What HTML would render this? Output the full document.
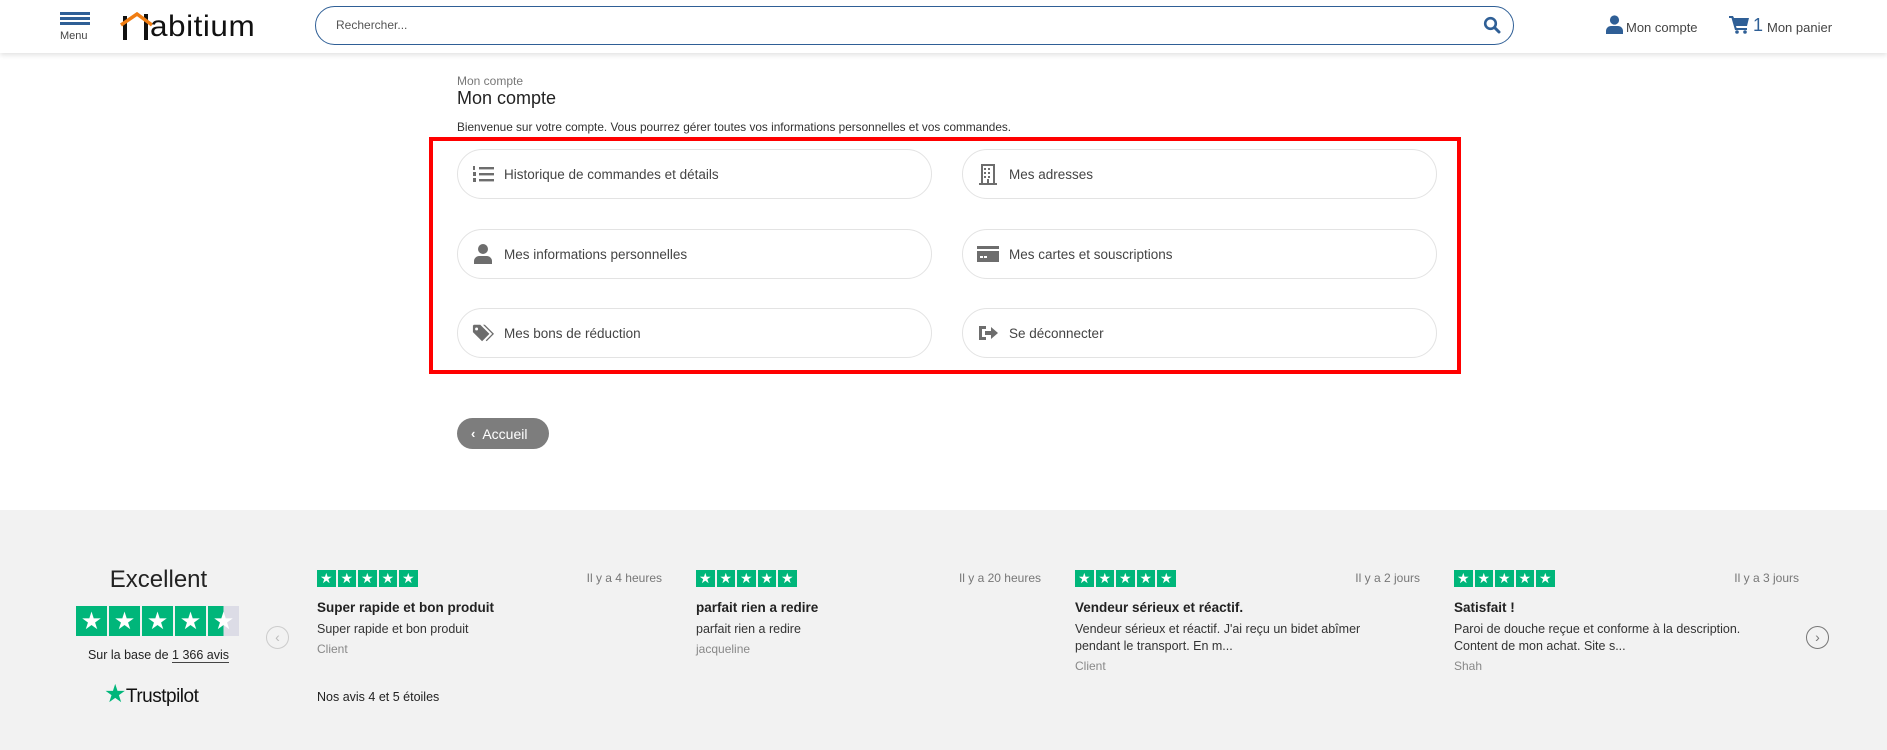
<!DOCTYPE html>
<html><head><meta charset="utf-8"><style>
*{box-sizing:border-box;margin:0;padding:0}
body{width:1887px;height:750px;position:relative;background:#fff;font-family:"Liberation Sans",sans-serif;color:#333;overflow:hidden}
.a{position:absolute}
.hdr{left:0;top:0;width:1887px;height:53px;background:#fff;box-shadow:0 2px 5px rgba(0,0,0,.12);z-index:2}
.card{position:absolute;width:475px;height:50px;border:1px solid #e3e3e3;border-radius:25px;background:#fff;font-size:13.5px;color:#444;display:flex;align-items:center;padding-left:14px}
.card svg{width:22px;height:22px;margin-right:10px;fill:#6d6d6d}
.stars{display:flex;gap:2px}
.stars span{background:#00b67a;display:flex;align-items:center;justify-content:center;color:#fff}
.rv{position:absolute;top:570px;width:345px;font-size:12.5px}
.rv .t{position:absolute;right:0;top:1px;color:#777;font-size:12px}
.rv b{display:block;margin-top:13px;font-size:13.5px;color:#222}
.rv p{margin-top:6px;line-height:17px;color:#333}
.rv i{font-style:normal;display:block;margin-top:4px;color:#888;font-size:12px}
</style></head><body>
<div class="a hdr">
  <div class="a" style="left:60px;top:12px;width:30px;height:3px;background:#2f5f96"></div>
  <div class="a" style="left:60px;top:17px;width:30px;height:3px;background:#2f5f96"></div>
  <div class="a" style="left:60px;top:22px;width:30px;height:3px;background:#2f5f96"></div>
  <div class="a" style="left:60px;top:30px;font-size:11px;color:#444">Menu</div>
  <div class="a" style="left:123px;top:16px;width:4px;height:24px;background:#111"></div>
  <div class="a" style="left:144px;top:14px;width:4px;height:26px;background:#111"></div>
  <svg class="a" style="left:118px;top:10px" width="36" height="18"><polyline points="3,15 19,4 34,15" fill="none" stroke="#f07d12" stroke-width="3.5"/></svg>
  <div class="a" style="left:150px;top:10px;font-size:30px;letter-spacing:0.5px;color:#111;transform:scaleX(1.05);transform-origin:left">abitium</div>
  <div class="a" style="left:315px;top:6px;width:1199px;height:39px;border:1px solid #2f5f96;border-radius:20px"></div>
  <div class="a" style="left:336px;top:18px;font-size:12px;color:#555">Rechercher...</div>
  <svg class="a" style="left:1483px;top:16px" width="18" height="18" viewBox="0 0 18 18"><circle cx="7.5" cy="7.5" r="5.3" fill="none" stroke="#2f5f96" stroke-width="2.6"/><line x1="11.5" y1="11.5" x2="16" y2="16" stroke="#2f5f96" stroke-width="3" stroke-linecap="round"/></svg>
  <svg class="a" style="left:1606px;top:15px" width="17" height="19" viewBox="0 0 17 19"><circle cx="8.5" cy="5" r="4.6" fill="#2f5f96"/><path d="M0 19v-3c0-3 2.5-5 5-5h7c2.5 0 5 2 5 5v3z" fill="#2f5f96"/></svg>
  <div class="a" style="left:1626px;top:20px;font-size:13px;color:#444">Mon compte</div>
  <svg class="a" style="left:1729px;top:15px" width="21" height="19" viewBox="0 0 21 19"><path d="M0 1h4l1 2h15l-2 8H7l.6 2H18v2H6L2.5 3H0z" fill="#2f5f96"/><circle cx="8" cy="17" r="1.8" fill="#2f5f96"/><circle cx="16" cy="17" r="1.8" fill="#2f5f96"/></svg>
  <div class="a" style="left:1753px;top:15px;font-size:18px;color:#2f5f96">1</div>
  <div class="a" style="left:1767px;top:20px;font-size:13px;color:#444">Mon panier</div>
</div>

<div class="a" style="left:457px;top:74px;font-size:12px;color:#777">Mon compte</div>
<div class="a" style="left:457px;top:88px;font-size:18px;color:#222">Mon compte</div>
<div class="a" style="left:457px;top:120px;font-size:11.8px;color:#333">Bienvenue sur votre compte. Vous pourrez gérer toutes vos informations personnelles et vos commandes.</div>

<div class="a" style="left:429px;top:137px;width:1032px;height:237px;border:4px solid #f00"></div>

<div class="card" style="left:457px;top:149px"><svg viewBox="0 0 22 22"><rect x="7" y="4" width="15" height="2.4"/><rect x="7" y="10" width="15" height="2.4"/><rect x="7" y="16" width="15" height="2.4"/><rect x="1" y="3" width="2" height="4"/><rect x="1" y="9" width="3" height="4"/><rect x="1" y="15" width="3" height="4"/></svg>Historique de commandes et détails</div>
<div class="card" style="left:962px;top:149px"><svg viewBox="0 0 22 22"><path d="M4 1h14v19h2v2H2v-2h2zM6 3v17h4v-4h2v4h4V3zM7 5h2v2H7zm4 0h2v2h-2zM7 9h2v2H7zm4 0h2v2h-2zM7 13h2v2H7zm4 0h2v2h-2z" fill-rule="evenodd"/></svg>Mes adresses</div>
<div class="card" style="left:457px;top:229px"><svg viewBox="0 0 22 22"><circle cx="11" cy="6" r="5"/><path d="M2 21v-3c0-3 3-5 5-5h8c2 0 5 2 5 5v3z"/></svg>Mes informations personnelles</div>
<div class="card" style="left:962px;top:229px"><svg viewBox="0 0 22 22"><path d="M0 3h22v3H0zM0 8h22v11H0z"/><rect x="3" y="13" width="3" height="2" fill="#fff"/><rect x="7" y="13" width="3" height="2" fill="#fff"/></svg>Mes cartes et souscriptions</div>
<div class="card" style="left:457px;top:308px"><svg viewBox="0 0 24 22"><path d="M1 3v7l10 10 8-8L9 2H2zM5 5a1.6 1.6 0 1 1 0 3.2A1.6 1.6 0 0 1 5 5z" fill-rule="evenodd"/><path d="M12 2h2l10 10-8 8-1-1 7-7z"/></svg>Mes bons de réduction</div>
<div class="card" style="left:962px;top:308px"><svg viewBox="0 0 22 22"><path d="M2 4h7v3H5v8h4v3H2z"/><path d="M8 9h6V5l7 6-7 6v-4H8z"/></svg>Se déconnecter</div>

<div class="a" style="left:457px;top:418px;width:92px;height:31px;border-radius:16px;background:#7d7d7d;color:#fff;font-size:14px;display:flex;align-items:center;padding-left:14px"><span style="font-weight:bold;margin-right:7px;font-size:13px">&lsaquo;</span>Accueil</div>

<div class="a" style="left:0;top:510px;width:1887px;height:240px;background:#f2f2f2"></div>
<div class="a" style="left:0;top:566px;width:317px;text-align:center;font-size:24px;color:#222">Excellent</div>
<div class="a stars" style="left:76px;top:606px">
  <span style="width:31px;height:30px;font-size:24px">★</span><span style="width:31px;height:30px;font-size:24px">★</span><span style="width:31px;height:30px;font-size:24px">★</span><span style="width:31px;height:30px;font-size:24px">★</span><span style="width:31px;height:30px;font-size:24px;background:linear-gradient(90deg,#00b67a 50%,#dcdce6 50%)">★</span>
</div>
<div class="a" style="left:0;top:648px;width:317px;text-align:center;font-size:12.5px;color:#222">Sur la base de <span style="border-bottom:1px solid #444">1 366 avis</span></div>
<div class="a" style="left:104px;top:679px;font-size:19px;color:#111;letter-spacing:-.5px"><span style="color:#00b67a;font-size:25px">★</span>Trustpilot</div>

<div class="a" style="left:266px;top:626px;width:23px;height:23px;border:1px solid #ccc;border-radius:50%;color:#bbb;font-size:14px;text-align:center;line-height:20px">&lsaquo;</div>
<div class="a" style="left:1806px;top:626px;width:23px;height:23px;border:1px solid #777;border-radius:50%;color:#777;font-size:14px;text-align:center;line-height:20px">&rsaquo;</div>

<div class="rv" style="left:317px"><div class="stars"><span style="width:18.5px;height:17px;font-size:14px">★</span><span style="width:18.5px;height:17px;font-size:14px">★</span><span style="width:18.5px;height:17px;font-size:14px">★</span><span style="width:18.5px;height:17px;font-size:14px">★</span><span style="width:18.5px;height:17px;font-size:14px">★</span></div><div class="t">Il y a 4 heures</div><b>Super rapide et bon produit</b><p>Super rapide et bon produit</p><i>Client</i></div>
<div class="rv" style="left:696px"><div class="stars"><span style="width:18.5px;height:17px;font-size:14px">★</span><span style="width:18.5px;height:17px;font-size:14px">★</span><span style="width:18.5px;height:17px;font-size:14px">★</span><span style="width:18.5px;height:17px;font-size:14px">★</span><span style="width:18.5px;height:17px;font-size:14px">★</span></div><div class="t">Il y a 20 heures</div><b>parfait rien a redire</b><p>parfait rien a redire</p><i>jacqueline</i></div>
<div class="rv" style="left:1075px"><div class="stars"><span style="width:18.5px;height:17px;font-size:14px">★</span><span style="width:18.5px;height:17px;font-size:14px">★</span><span style="width:18.5px;height:17px;font-size:14px">★</span><span style="width:18.5px;height:17px;font-size:14px">★</span><span style="width:18.5px;height:17px;font-size:14px">★</span></div><div class="t">Il y a 2 jours</div><b>Vendeur sérieux et réactif.</b><p>Vendeur sérieux et réactif. J'ai reçu un bidet abîmer<br>pendant le transport. En m...</p><i>Client</i></div>
<div class="rv" style="left:1454px"><div class="stars"><span style="width:18.5px;height:17px;font-size:14px">★</span><span style="width:18.5px;height:17px;font-size:14px">★</span><span style="width:18.5px;height:17px;font-size:14px">★</span><span style="width:18.5px;height:17px;font-size:14px">★</span><span style="width:18.5px;height:17px;font-size:14px">★</span></div><div class="t">Il y a 3 jours</div><b>Satisfait !</b><p>Paroi de douche reçue et conforme à la description.<br>Content de mon achat. Site s...</p><i>Shah</i></div>
<div class="a" style="left:317px;top:690px;font-size:12.5px;color:#222">Nos avis 4 et 5 étoiles</div>
</body></html>
